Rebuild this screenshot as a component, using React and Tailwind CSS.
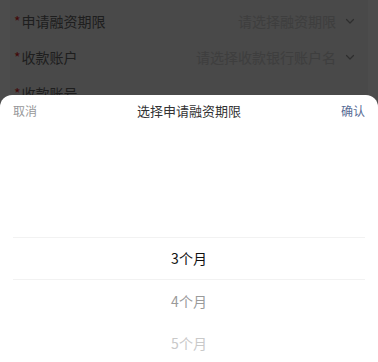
import React from 'react';

const font = { fontFamily: '"Noto Sans CJK SC", "Noto Sans", sans-serif' };

const Chevron = () => (
  <svg width="12" height="12" viewBox="0 0 12 12" fill="none" className="shrink-0">
    <path d="M2.5 4.5 L6 8 L9.5 4.5" stroke="#999" strokeWidth="1.2" strokeLinecap="round" strokeLinejoin="round" />
  </svg>
);

const FormRow = ({ label, placeholder }) => (
  <div className="h-[36px] flex items-center justify-between pl-[4px] pr-[12px]">
    <div className="flex items-center text-[14px] text-[#666]">
      <span className="text-[#e02020] mr-[1px]">*</span>
      {label}
    </div>
    {placeholder && (
      <div className="flex items-center gap-[8px] text-[14px] text-[#cfcfcf]">
        {placeholder}
        <Chevron />
      </div>
    )}
  </div>
);

const months = ['3个月', '4个月', '5个月'];

export default function App() {
  return (
    <div className="relative w-[378px] h-[362px] overflow-hidden bg-white" style={font}>
      {/* page behind the mask */}
      <div className="px-[10px] h-full">
        <div className="bg-[#f3f3f3] h-full pt-[3px]">
          <FormRow label="申请融资期限" placeholder="请选择融资期限" />
          <FormRow label="收款账户" placeholder="请选择收款银行账户名" />
          <FormRow label="收款账号" />
        </div>
      </div>

      {/* mask */}
      <div className="absolute inset-0 bg-black/70"></div>

      {/* bottom sheet */}
      <div className="absolute left-0 right-0 top-[95px] bottom-0 bg-white rounded-t-[12px] overflow-hidden">
        <div className="h-[32px] flex items-center justify-between px-[13px]">
          <span className="text-[12px] text-[#969799]">取消</span>
          <span className="text-[13px] text-[#323233]">选择申请融资期限</span>
          <span className="text-[12px] text-[#576b95]">确认</span>
        </div>
        <div className="pt-[110px]">
          <div className="mx-[13px] h-[43px] border-y border-[#f2f2f2] flex items-center justify-center text-[14px] text-[#111]">
            {months[0]}
          </div>
          <div className="h-[42px] flex items-center justify-center text-[14px] text-[#9a9a9a]">
            {months[1]}
          </div>
          <div className="h-[43px] flex items-center justify-center text-[14px] text-[#c9c9c9]">
            {months[2]}
          </div>
        </div>
      </div>
    </div>
  );
}
